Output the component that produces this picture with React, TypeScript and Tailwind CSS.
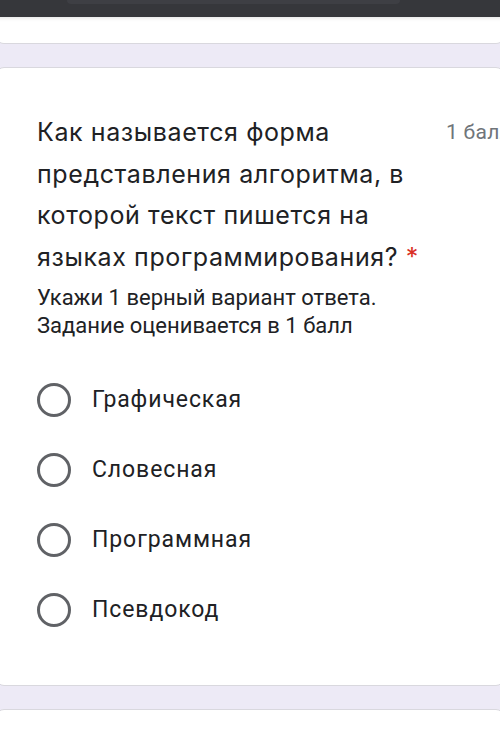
const options = ['Графическая', 'Словесная', 'Программная', 'Псевдокод'];

function Radio() {
  return <span className="block w-[34px] h-[34px] rounded-full border-[3px] border-[#606266] shrink-0" />;
}

export default function App() {
  return (
    <div className="w-[500px] h-[732px] overflow-hidden bg-[#edeaf6] font-['Roboto',sans-serif] text-[#202124]">
      {/* system bar */}
      <div className="h-[17px] bg-[#36373b] pl-[67px]">
        <div className="w-[333px] h-[4px] rounded-b-full bg-[#3e3f44]" />
      </div>

      {/* bottom of previous card */}
      <div className="h-[27px] -mx-[4px] bg-white border-b border-[#d9d8de] rounded-b-lg shadow-[inset_0_4px_4px_-3px_rgba(0,0,0,0.12)]" />

      <div className="h-[23px]" />

      {/* question card */}
      <div className="-mx-[4px] h-[619px] bg-white border border-[#d9d8de] rounded-lg pt-[44px] pl-[40px]">
        <div className="flex">
          <h2 className="flex-1 font-['Inter',sans-serif] text-[25px] tracking-[0.6px] leading-[41.5px] text-[#202124]">
            Как называется форма
            <br />
            представления алгоритма, в
            <br />
            которой текст пишется на
            <br />
            языках программирования? <span className="text-[#d93025]">*</span>
          </h2>
          <div className="w-[57px] whitespace-nowrap overflow-hidden text-[21px] tracking-[0.3px] leading-[41px] text-[#70757a]">1 балл</div>
        </div>

        <p className="mt-[6px] text-[22px] leading-[28px] text-[#202124]">
          Укажи 1 верный вариант ответа.
          <br />
          Задание оценивается в 1 балл
        </p>

        <div className="mt-[25px] flex flex-col">
          {options.map((o) => (
            <label key={o} className="h-[70px] flex items-center gap-[21px]">
              <Radio />
              <span className="text-[23px] tracking-[0.9px]">{o}</span>
            </label>
          ))}
        </div>
      </div>

      <div className="h-[23px]" />

      <div className="-mx-[4px] h-[40px] bg-white border border-[#d9d8de] rounded-lg" />
    </div>
  );
}
